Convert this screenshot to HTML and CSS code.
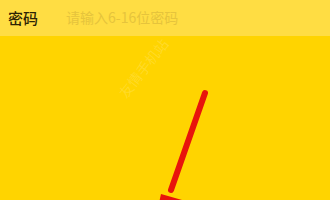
FILE: index.html
```html
<!DOCTYPE html>
<html lang="zh">
<head>
<meta charset="utf-8">
<link rel="stylesheet" href="styles.css">
</head>
<body>
<div class="page">
  <div class="field">
    <span class="label">密码</span>
    <span class="placeholder">请输入6-16位密码</span>
  </div>
  <div class="body"></div>
  <div class="watermark">友情手机站</div>
  <svg class="arrow" width="330" height="200" viewBox="0 0 330 200">
    <line x1="205" y1="93" x2="171" y2="190" stroke="#e8140c" stroke-width="6" stroke-linecap="round"/>
    <polygon points="157,212 161,194 182,200" fill="#e8140c"/>
  </svg>
</div>
</body>
</html>
```
FILE: styles.css
```css
html, body { margin: 0; padding: 0; }
body { width: 330px; height: 200px; overflow: hidden; background: #ffd400; }
.page { position: relative; width: 330px; height: 200px; display: flex; flex-direction: column; font-family: "Noto Sans CJK SC", "Noto Sans", sans-serif; }
.field { height: 36px; flex: none; background: #ffdd43; display: flex; align-items: center; padding-left: 8px; padding-bottom: 2px; box-sizing: border-box; }
.label { font-size: 15px; font-weight: 500; color: #2e2404; width: 58px; }
.placeholder { font-size: 14px; color: #e6c43c; }
.body { flex: 1; background: #ffd400; }
.watermark { position: absolute; left: 108px; top: 58px; font-size: 14px; color: rgba(255,255,255,0.16); transform: rotate(-52deg); transform-origin: center; white-space: nowrap; }
.arrow { position: absolute; left: 0; top: 0; }
```
